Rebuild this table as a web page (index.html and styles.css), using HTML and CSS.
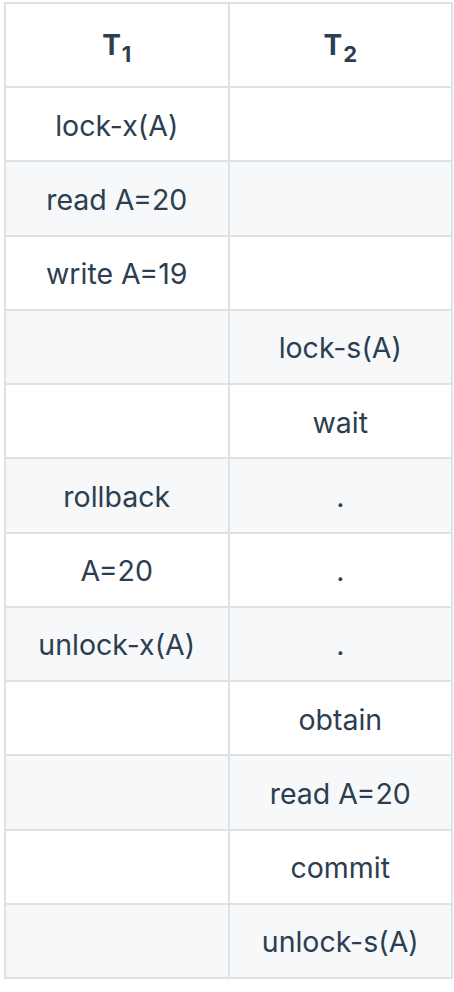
FILE: index.html
```html
<!DOCTYPE html>
<html>
<head>
<meta charset="utf-8">
<link rel="stylesheet" href="styles.css">
</head>
<body>
<table class="sched">
  <thead>
    <tr><th>T<sub>1</sub></th><th>T<sub>2</sub></th></tr>
  </thead>
  <tbody>
    <tr><td>lock-x(A)</td><td></td></tr>
    <tr><td>read A=20</td><td></td></tr>
    <tr><td>write A=19</td><td></td></tr>
    <tr><td></td><td>lock-s(A)</td></tr>
    <tr><td></td><td>wait</td></tr>
    <tr><td>rollback</td><td>.</td></tr>
    <tr><td>A=20</td><td>.</td></tr>
    <tr><td>unlock-x(A)</td><td>.</td></tr>
    <tr><td></td><td>obtain</td></tr>
    <tr><td></td><td>read A=20</td></tr>
    <tr><td></td><td>commit</td></tr>
    <tr><td></td><td>unlock-s(A)</td></tr>
  </tbody>
</table>
</body>
</html>
```
FILE: styles.css
```css
html, body {
  margin: 0;
  padding: 0;
  background: #ffffff;
}
body {
  font-family: Inter, "Noto Sans", sans-serif;
  color: #2c3e50;
}
.sched {
  border-collapse: collapse;
  table-layout: fixed;
  width: 449px;
  margin: 2px 0 0 4px;
  font-size: 28.5px;
}
.sched th,
.sched td {
  border: 2px solid #dfe2e5;
  text-align: center;
  padding: 0;
  line-height: 32px;
}
.sched th {
  height: 82px;
  font-weight: 700;
  font-size: 28px;
}
.sched th sub {
  font-size: 22px;
  vertical-align: -7px;
  line-height: 0;
  margin-left: 1px;
}
.sched td {
  height: 69.25px;
  padding-top: 3px;
}
.sched tbody tr:nth-child(2n) {
  background: #f6f8fa;
}
```
